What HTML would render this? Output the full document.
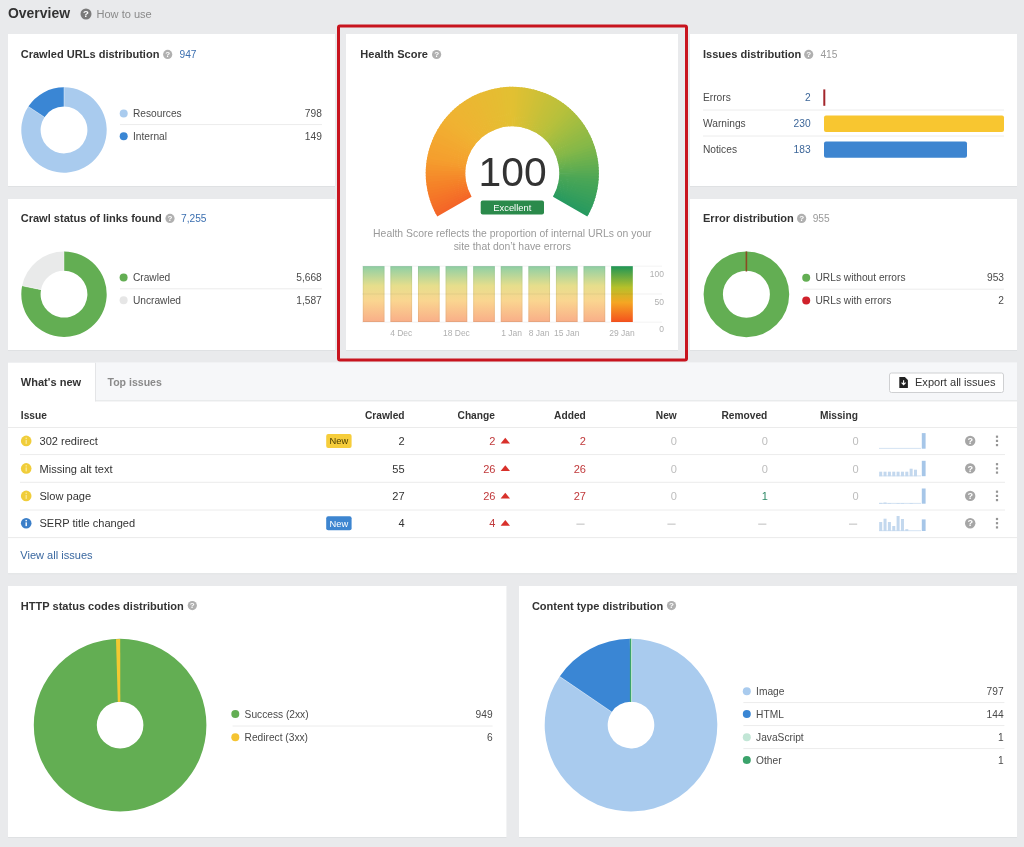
<!DOCTYPE html><html><head><meta charset="utf-8"><style>html,body{margin:0;padding:0;background:#e9eaec;}svg{display:block;will-change:transform}text{font-family:"Liberation Sans", sans-serif;}</style></head><body>
<svg width="1024" height="847" viewBox="0 0 1024 847">
<rect x="0" y="0" width="1024" height="847" fill="#e9eaec" rx="0" />
<text x="8" y="17.8" font-size="13.95" fill="#333" font-weight="bold" text-anchor="start" >Overview</text>
<circle cx="86" cy="14" r="5.5" fill="#7a7a7a"/>
<text x="86" y="17.41" font-size="9.625" fill="#fff" font-weight="bold" text-anchor="middle" >?</text>
<text x="96.5" y="18" font-size="11.05" fill="#8a8a8a" font-weight="normal" text-anchor="start" >How to use</text>
<rect x="8" y="35" width="327" height="152" fill="#dfe1e3" rx="0" />
<rect x="8" y="34" width="327" height="152" fill="#fff" rx="0" />
<text x="20.7" y="58.4" font-size="11.05" fill="#333" font-weight="bold" text-anchor="start" >Crawled URLs distribution</text>
<circle cx="167.7" cy="54.4" r="4.6" fill="#b0b0b0"/>
<text x="167.7" y="57.251999999999995" font-size="8.049999999999999" fill="#fff" font-weight="bold" text-anchor="middle" >?</text>
<text x="179.5" y="58.4" font-size="10.2" fill="#3b6fb0" font-weight="normal" text-anchor="start" >947</text>
<path d="M64.00,87.30 A42.7,42.7 0 1,1 28.33,106.52 L44.46,117.13 A23.4,23.4 0 1,0 64.00,106.60 Z" fill="#a9cbee"/>
<path d="M28.33,106.52 A42.7,42.7 0 0,1 64.00,87.30 L64.00,106.60 A23.4,23.4 0 0,0 44.46,117.13 Z" fill="#3a86d4"/>
<line x1="64.00" y1="106.60" x2="64.00" y2="87.30" stroke="rgba(255,255,255,0.45)" stroke-width="0.9"/>
<line x1="44.46" y1="117.13" x2="28.33" y2="106.52" stroke="rgba(255,255,255,0.45)" stroke-width="0.9"/>
<circle cx="123.7" cy="113.4" r="4" fill="#a9cbee"/>
<text x="133.0" y="117.10000000000001" font-size="10.2" fill="#4a4a4a" font-weight="normal" text-anchor="start" >Resources</text>
<text x="321.8" y="117.10000000000001" font-size="10.2" fill="#4a4a4a" font-weight="normal" text-anchor="end" >798</text>
<line x1="120" y1="124.6" x2="322" y2="124.6" stroke="#ececec" stroke-width="1"/>
<circle cx="123.7" cy="136.2" r="4" fill="#3a86d4"/>
<text x="133.0" y="139.89999999999998" font-size="10.2" fill="#4a4a4a" font-weight="normal" text-anchor="start" >Internal</text>
<text x="321.8" y="139.89999999999998" font-size="10.2" fill="#4a4a4a" font-weight="normal" text-anchor="end" >149</text>
<rect x="8" y="200" width="327" height="151" fill="#dfe1e3" rx="0" />
<rect x="8" y="199" width="327" height="151" fill="#fff" rx="0" />
<text x="20.7" y="222.2" font-size="11.05" fill="#333" font-weight="bold" text-anchor="start" >Crawl status of links found</text>
<circle cx="170" cy="218.4" r="4.6" fill="#b0b0b0"/>
<text x="170" y="221.252" font-size="8.049999999999999" fill="#fff" font-weight="bold" text-anchor="middle" >?</text>
<text x="181" y="222.2" font-size="10.2" fill="#3b6fb0" font-weight="normal" text-anchor="start" >7,255</text>
<path d="M64.00,251.50 A42.7,42.7 0 1,1 22.12,285.87 L41.05,289.63 A23.4,23.4 0 1,0 64.00,270.80 Z" fill="#63ae53"/>
<path d="M22.12,285.87 A42.7,42.7 0 0,1 64.00,251.50 L64.00,270.80 A23.4,23.4 0 0,0 41.05,289.63 Z" fill="#e9eaea"/>
<line x1="64.00" y1="270.80" x2="64.00" y2="251.50" stroke="rgba(255,255,255,0.45)" stroke-width="0.9"/>
<line x1="41.05" y1="289.63" x2="22.12" y2="285.87" stroke="rgba(255,255,255,0.45)" stroke-width="0.9"/>
<circle cx="123.6" cy="277.4" r="4" fill="#63ae53"/>
<text x="132.9" y="281.09999999999997" font-size="10.2" fill="#4a4a4a" font-weight="normal" text-anchor="start" >Crawled</text>
<text x="321.8" y="281.09999999999997" font-size="10.2" fill="#4a4a4a" font-weight="normal" text-anchor="end" >5,668</text>
<line x1="120" y1="288.8" x2="322" y2="288.8" stroke="#ececec" stroke-width="1"/>
<circle cx="123.6" cy="300.2" r="4" fill="#e6e6e6"/>
<text x="132.9" y="303.9" font-size="10.2" fill="#4a4a4a" font-weight="normal" text-anchor="start" >Uncrawled</text>
<text x="321.8" y="303.9" font-size="10.2" fill="#4a4a4a" font-weight="normal" text-anchor="end" >1,587</text>
<rect x="690" y="35" width="327" height="152" fill="#dfe1e3" rx="0" />
<rect x="690" y="34" width="327" height="152" fill="#fff" rx="0" />
<text x="703" y="58.4" font-size="11.05" fill="#333" font-weight="bold" text-anchor="start" >Issues distribution</text>
<circle cx="808.7" cy="54.4" r="4.6" fill="#b0b0b0"/>
<text x="808.7" y="57.251999999999995" font-size="8.049999999999999" fill="#fff" font-weight="bold" text-anchor="middle" >?</text>
<text x="820.4" y="58.4" font-size="10.2" fill="#999" font-weight="normal" text-anchor="start" >415</text>
<text x="703" y="100.9" font-size="10.2" fill="#4a4a4a" font-weight="normal" text-anchor="start" >Errors</text>
<text x="810.6" y="100.9" font-size="10.2" fill="#3c6699" font-weight="normal" text-anchor="end" >2</text>
<text x="703" y="126.9" font-size="10.2" fill="#4a4a4a" font-weight="normal" text-anchor="start" >Warnings</text>
<text x="810.6" y="126.9" font-size="10.2" fill="#3c6699" font-weight="normal" text-anchor="end" >230</text>
<text x="703" y="152.89999999999998" font-size="10.2" fill="#4a4a4a" font-weight="normal" text-anchor="start" >Notices</text>
<text x="810.6" y="152.89999999999998" font-size="10.2" fill="#3c6699" font-weight="normal" text-anchor="end" >183</text>
<line x1="703" y1="110" x2="1004" y2="110" stroke="#ececec" stroke-width="1"/>
<line x1="703" y1="136" x2="1004" y2="136" stroke="#ececec" stroke-width="1"/>
<rect x="823.3" y="89.4" width="2" height="16.4" fill="#a3262c" rx="0" />
<rect x="824" y="115.4" width="180" height="16.6" fill="#f8c630" rx="2" />
<rect x="824" y="141.4" width="143" height="16.4" fill="#3d85d0" rx="2" />
<rect x="690" y="200" width="327" height="151" fill="#dfe1e3" rx="0" />
<rect x="690" y="199" width="327" height="151" fill="#fff" rx="0" />
<text x="703" y="222.2" font-size="11.05" fill="#333" font-weight="bold" text-anchor="start" >Error distribution</text>
<circle cx="801.6" cy="218.4" r="4.6" fill="#b0b0b0"/>
<text x="801.6" y="221.252" font-size="8.049999999999999" fill="#fff" font-weight="bold" text-anchor="middle" >?</text>
<text x="812.7" y="222.2" font-size="10.2" fill="#999" font-weight="normal" text-anchor="start" >955</text>
<path d="M703.6,294.3 a42.8,42.8 0 1,0 85.6,0 a42.8,42.8 0 1,0 -85.6,0 Z M722.9,294.3 a23.5,23.5 0 1,1 47.0,0 a23.5,23.5 0 1,1 -47.0,0 Z" fill="#63ae53" fill-rule="evenodd"/>
<rect x="745.6" y="251.5" width="1.6" height="20" fill="#8a4a22" rx="0" />
<circle cx="806.2" cy="277.7" r="4" fill="#63ae53"/>
<text x="815.5" y="281.4" font-size="10.2" fill="#4a4a4a" font-weight="normal" text-anchor="start" >URLs without errors</text>
<text x="1004" y="281.4" font-size="10.2" fill="#4a4a4a" font-weight="normal" text-anchor="end" >953</text>
<line x1="803" y1="289.2" x2="1004" y2="289.2" stroke="#ececec" stroke-width="1"/>
<circle cx="806.2" cy="300.4" r="4" fill="#d0212b"/>
<text x="815.5" y="304.09999999999997" font-size="10.2" fill="#4a4a4a" font-weight="normal" text-anchor="start" >URLs with errors</text>
<text x="1004" y="304.09999999999997" font-size="10.2" fill="#4a4a4a" font-weight="normal" text-anchor="end" >2</text>
<rect x="346" y="35" width="332" height="316" fill="#dfe1e3" rx="0" />
<rect x="346" y="34" width="332" height="316" fill="#fff" rx="0" />
<rect x="338.5" y="26" width="348" height="334" fill="none" stroke="#c8141e" stroke-width="3" rx="1.5"/>
<text x="360.3" y="58.3" font-size="11.05" fill="#333" font-weight="bold" text-anchor="start" >Health Score</text>
<circle cx="436.6" cy="54.5" r="4.6" fill="#b0b0b0"/>
<text x="436.6" y="57.352" font-size="8.049999999999999" fill="#fff" font-weight="bold" text-anchor="middle" >?</text>
<defs><clipPath id="gclip"><path d="M437.30,216.60 A86.6,86.6 0 1,1 587.30,216.60 L553.00,196.80 A47,47 0 1,0 471.60,196.80 Z"/></clipPath></defs>
<g clip-path="url(#gclip)">
<path d="M435.50,219.45 A89.6,89.6 0 0,1 432.68,214.40 L473.20,193.48 A44,44 0 0,0 474.58,195.96 Z" fill="#f46528"/>
<path d="M433.19,215.36 A89.6,89.6 0 0,1 431.29,211.59 L472.52,192.10 A44,44 0 0,0 473.45,193.96 Z" fill="#f46828"/>
<path d="M431.77,212.58 A89.6,89.6 0 0,1 430.01,208.74 L471.89,190.70 A44,44 0 0,0 472.75,192.59 Z" fill="#f46b28"/>
<path d="M430.45,209.74 A89.6,89.6 0 0,1 428.82,205.85 L471.31,189.28 A44,44 0 0,0 472.10,191.20 Z" fill="#f46e28"/>
<path d="M429.22,206.86 A89.6,89.6 0 0,1 427.74,202.91 L470.77,187.84 A44,44 0 0,0 471.50,189.78 Z" fill="#f47128"/>
<path d="M428.10,203.95 A89.6,89.6 0 0,1 426.75,199.94 L470.29,186.38 A44,44 0 0,0 470.95,188.35 Z" fill="#f57328"/>
<path d="M427.09,200.99 A89.6,89.6 0 0,1 425.88,196.94 L469.86,184.91 A44,44 0 0,0 470.45,186.90 Z" fill="#f57628"/>
<path d="M426.17,198.00 A89.6,89.6 0 0,1 425.10,193.91 L469.48,183.42 A44,44 0 0,0 470.00,185.43 Z" fill="#f57928"/>
<path d="M425.36,194.98 A89.6,89.6 0 0,1 424.44,190.86 L469.15,181.92 A44,44 0 0,0 469.61,183.94 Z" fill="#f57c28"/>
<path d="M424.66,191.93 A89.6,89.6 0 0,1 423.88,187.78 L468.88,180.41 A44,44 0 0,0 469.26,182.45 Z" fill="#f57f28"/>
<path d="M424.06,188.86 A89.6,89.6 0 0,1 423.43,184.68 L468.66,178.89 A44,44 0 0,0 468.97,180.94 Z" fill="#f58228"/>
<path d="M423.57,185.77 A89.6,89.6 0 0,1 423.08,181.58 L468.49,177.36 A44,44 0 0,0 468.73,179.42 Z" fill="#f58429"/>
<path d="M423.19,182.67 A89.6,89.6 0 0,1 422.85,178.46 L468.37,175.83 A44,44 0 0,0 468.54,177.90 Z" fill="#f5882a"/>
<path d="M422.92,179.55 A89.6,89.6 0 0,1 422.72,175.33 L468.31,174.30 A44,44 0 0,0 468.41,176.37 Z" fill="#f58a2a"/>
<path d="M422.75,176.43 A89.6,89.6 0 0,1 422.71,172.21 L468.30,172.76 A44,44 0 0,0 468.33,174.84 Z" fill="#f58e2b"/>
<path d="M422.70,173.30 A89.6,89.6 0 0,1 422.80,169.08 L468.35,171.23 A44,44 0 0,0 468.30,173.30 Z" fill="#f5902b"/>
<path d="M422.75,170.17 A89.6,89.6 0 0,1 423.00,165.96 L468.45,169.69 A44,44 0 0,0 468.33,171.76 Z" fill="#f5942c"/>
<path d="M422.92,167.05 A89.6,89.6 0 0,1 423.31,162.85 L468.60,168.17 A44,44 0 0,0 468.41,170.23 Z" fill="#f5962c"/>
<path d="M423.19,163.93 A89.6,89.6 0 0,1 423.73,159.75 L468.81,166.64 A44,44 0 0,0 468.54,168.70 Z" fill="#f59a2d"/>
<path d="M423.57,160.83 A89.6,89.6 0 0,1 424.26,156.66 L469.07,165.13 A44,44 0 0,0 468.73,167.18 Z" fill="#f59c2e"/>
<path d="M424.06,157.74 A89.6,89.6 0 0,1 424.89,153.60 L469.38,163.63 A44,44 0 0,0 468.97,165.66 Z" fill="#f59f2e"/>
<path d="M424.66,154.67 A89.6,89.6 0 0,1 425.63,150.56 L469.74,162.13 A44,44 0 0,0 469.26,164.15 Z" fill="#f4a02e"/>
<path d="M425.36,151.62 A89.6,89.6 0 0,1 426.48,147.55 L470.16,160.66 A44,44 0 0,0 469.61,162.66 Z" fill="#f4a12f"/>
<path d="M426.17,148.60 A89.6,89.6 0 0,1 427.43,144.57 L470.62,159.19 A44,44 0 0,0 470.00,161.17 Z" fill="#f4a32f"/>
<path d="M427.09,145.61 A89.6,89.6 0 0,1 428.48,141.63 L471.14,157.75 A44,44 0 0,0 470.45,159.70 Z" fill="#f4a42f"/>
<path d="M428.10,142.65 A89.6,89.6 0 0,1 429.64,138.72 L471.71,156.32 A44,44 0 0,0 470.95,158.25 Z" fill="#f3a52f"/>
<path d="M429.22,139.74 A89.6,89.6 0 0,1 430.90,135.86 L472.33,154.91 A44,44 0 0,0 471.50,156.82 Z" fill="#f3a730"/>
<path d="M430.45,136.86 A89.6,89.6 0 0,1 432.25,133.04 L472.99,153.53 A44,44 0 0,0 472.10,155.40 Z" fill="#f2a830"/>
<path d="M431.77,134.02 A89.6,89.6 0 0,1 433.71,130.27 L473.71,152.17 A44,44 0 0,0 472.75,154.01 Z" fill="#f2a930"/>
<path d="M433.19,131.24 A89.6,89.6 0 0,1 435.26,127.56 L474.47,150.84 A44,44 0 0,0 473.45,152.64 Z" fill="#f2ab31"/>
<path d="M434.70,128.50 A89.6,89.6 0 0,1 436.90,124.89 L475.27,149.53 A44,44 0 0,0 474.19,151.30 Z" fill="#f2ac31"/>
<path d="M436.31,125.82 A89.6,89.6 0 0,1 438.64,122.29 L476.13,148.25 A44,44 0 0,0 474.99,149.98 Z" fill="#f1ad31"/>
<path d="M438.02,123.20 A89.6,89.6 0 0,1 440.46,119.75 L477.02,147.00 A44,44 0 0,0 475.82,148.70 Z" fill="#f1af31"/>
<path d="M439.81,120.63 A89.6,89.6 0 0,1 442.37,117.28 L477.96,145.79 A44,44 0 0,0 476.70,147.44 Z" fill="#f0b032"/>
<path d="M441.69,118.14 A89.6,89.6 0 0,1 444.37,114.87 L478.94,144.61 A44,44 0 0,0 477.63,146.21 Z" fill="#f0b132"/>
<path d="M443.66,115.71 A89.6,89.6 0 0,1 446.45,112.54 L479.96,143.46 A44,44 0 0,0 478.59,145.02 Z" fill="#f0b232"/>
<path d="M445.71,113.35 A89.6,89.6 0 0,1 448.61,110.28 L481.02,142.35 A44,44 0 0,0 479.60,143.86 Z" fill="#efb332"/>
<path d="M447.85,111.06 A89.6,89.6 0 0,1 450.85,108.09 L482.12,141.28 A44,44 0 0,0 480.65,142.74 Z" fill="#efb332"/>
<path d="M450.06,108.85 A89.6,89.6 0 0,1 453.16,105.99 L483.26,140.24 A44,44 0 0,0 481.74,141.65 Z" fill="#eeb432"/>
<path d="M452.35,106.71 A89.6,89.6 0 0,1 455.55,103.96 L484.43,139.25 A44,44 0 0,0 482.86,140.60 Z" fill="#edb532"/>
<path d="M454.71,104.66 A89.6,89.6 0 0,1 458.00,102.03 L485.64,138.30 A44,44 0 0,0 484.02,139.59 Z" fill="#edb532"/>
<path d="M457.14,102.69 A89.6,89.6 0 0,1 460.52,100.17 L486.87,137.39 A44,44 0 0,0 485.21,138.63 Z" fill="#ecb632"/>
<path d="M459.63,100.81 A89.6,89.6 0 0,1 463.11,98.41 L488.14,136.52 A44,44 0 0,0 486.44,137.70 Z" fill="#ecb632"/>
<path d="M462.20,99.02 A89.6,89.6 0 0,1 465.75,96.74 L489.44,135.70 A44,44 0 0,0 487.70,136.82 Z" fill="#ebb732"/>
<path d="M464.82,97.31 A89.6,89.6 0 0,1 468.45,95.16 L490.77,134.93 A44,44 0 0,0 488.98,135.99 Z" fill="#ebb732"/>
<path d="M467.50,95.70 A89.6,89.6 0 0,1 471.20,93.68 L492.12,134.20 A44,44 0 0,0 490.30,135.19 Z" fill="#eab832"/>
<path d="M470.24,94.19 A89.6,89.6 0 0,1 474.01,92.29 L493.50,133.52 A44,44 0 0,0 491.64,134.45 Z" fill="#eab832"/>
<path d="M473.02,92.77 A89.6,89.6 0 0,1 476.86,91.01 L494.90,132.89 A44,44 0 0,0 493.01,133.75 Z" fill="#e9b932"/>
<path d="M475.86,91.45 A89.6,89.6 0 0,1 479.75,89.82 L496.32,132.31 A44,44 0 0,0 494.40,133.10 Z" fill="#e8ba32"/>
<path d="M478.74,90.22 A89.6,89.6 0 0,1 482.69,88.74 L497.76,131.77 A44,44 0 0,0 495.82,132.50 Z" fill="#e8ba32"/>
<path d="M481.65,89.10 A89.6,89.6 0 0,1 485.66,87.75 L499.22,131.29 A44,44 0 0,0 497.25,131.95 Z" fill="#e7bb32"/>
<path d="M484.61,88.09 A89.6,89.6 0 0,1 488.66,86.88 L500.69,130.86 A44,44 0 0,0 498.70,131.45 Z" fill="#e7bb32"/>
<path d="M487.60,87.17 A89.6,89.6 0 0,1 491.69,86.10 L502.18,130.48 A44,44 0 0,0 500.17,131.00 Z" fill="#e6bc32"/>
<path d="M490.62,86.36 A89.6,89.6 0 0,1 494.74,85.44 L503.68,130.15 A44,44 0 0,0 501.66,130.61 Z" fill="#e6bc32"/>
<path d="M493.67,85.66 A89.6,89.6 0 0,1 497.82,84.88 L505.19,129.88 A44,44 0 0,0 503.15,130.26 Z" fill="#e5bd32"/>
<path d="M496.74,85.06 A89.6,89.6 0 0,1 500.92,84.43 L506.71,129.66 A44,44 0 0,0 504.66,129.97 Z" fill="#e5bd32"/>
<path d="M499.83,84.57 A89.6,89.6 0 0,1 504.02,84.08 L508.24,129.49 A44,44 0 0,0 506.18,129.73 Z" fill="#e4be32"/>
<path d="M502.93,84.19 A89.6,89.6 0 0,1 507.14,83.85 L509.77,129.37 A44,44 0 0,0 507.70,129.54 Z" fill="#e3bf32"/>
<path d="M506.05,83.92 A89.6,89.6 0 0,1 510.27,83.72 L511.30,129.31 A44,44 0 0,0 509.23,129.41 Z" fill="#e3bf32"/>
<path d="M509.17,83.75 A89.6,89.6 0 0,1 513.39,83.71 L512.84,129.30 A44,44 0 0,0 510.76,129.33 Z" fill="#e2c032"/>
<path d="M512.30,83.70 A89.6,89.6 0 0,1 516.52,83.80 L514.37,129.35 A44,44 0 0,0 512.30,129.30 Z" fill="#e1c032"/>
<path d="M515.43,83.75 A89.6,89.6 0 0,1 519.64,84.00 L515.91,129.45 A44,44 0 0,0 513.84,129.33 Z" fill="#dfc033"/>
<path d="M518.55,83.92 A89.6,89.6 0 0,1 522.75,84.31 L517.43,129.60 A44,44 0 0,0 515.37,129.41 Z" fill="#dcc033"/>
<path d="M521.67,84.19 A89.6,89.6 0 0,1 525.85,84.73 L518.96,129.81 A44,44 0 0,0 516.90,129.54 Z" fill="#dac034"/>
<path d="M524.77,84.57 A89.6,89.6 0 0,1 528.94,85.26 L520.47,130.07 A44,44 0 0,0 518.42,129.73 Z" fill="#d8c034"/>
<path d="M527.86,85.06 A89.6,89.6 0 0,1 532.00,85.89 L521.97,130.38 A44,44 0 0,0 519.94,129.97 Z" fill="#d6c035"/>
<path d="M530.93,85.66 A89.6,89.6 0 0,1 535.04,86.63 L523.47,130.74 A44,44 0 0,0 521.45,130.26 Z" fill="#d4c035"/>
<path d="M533.98,86.36 A89.6,89.6 0 0,1 538.05,87.48 L524.94,131.16 A44,44 0 0,0 522.94,130.61 Z" fill="#d2c036"/>
<path d="M537.00,87.17 A89.6,89.6 0 0,1 541.03,88.43 L526.41,131.62 A44,44 0 0,0 524.43,131.00 Z" fill="#cfc036"/>
<path d="M539.99,88.09 A89.6,89.6 0 0,1 543.97,89.48 L527.85,132.14 A44,44 0 0,0 525.90,131.45 Z" fill="#cdc037"/>
<path d="M542.95,89.10 A89.6,89.6 0 0,1 546.88,90.64 L529.28,132.71 A44,44 0 0,0 527.35,131.95 Z" fill="#cbc037"/>
<path d="M545.86,90.22 A89.6,89.6 0 0,1 549.74,91.90 L530.69,133.33 A44,44 0 0,0 528.78,132.50 Z" fill="#c9c038"/>
<path d="M548.74,91.45 A89.6,89.6 0 0,1 552.56,93.25 L532.07,133.99 A44,44 0 0,0 530.20,133.10 Z" fill="#c6c038"/>
<path d="M551.58,92.77 A89.6,89.6 0 0,1 555.33,94.71 L533.43,134.71 A44,44 0 0,0 531.59,133.75 Z" fill="#c4c039"/>
<path d="M554.36,94.19 A89.6,89.6 0 0,1 558.04,96.26 L534.76,135.47 A44,44 0 0,0 532.96,134.45 Z" fill="#c2c039"/>
<path d="M557.10,95.70 A89.6,89.6 0 0,1 560.71,97.90 L536.07,136.27 A44,44 0 0,0 534.30,135.19 Z" fill="#c0c03a"/>
<path d="M559.78,97.31 A89.6,89.6 0 0,1 563.31,99.64 L537.35,137.13 A44,44 0 0,0 535.62,135.99 Z" fill="#bec03a"/>
<path d="M562.40,99.02 A89.6,89.6 0 0,1 565.85,101.46 L538.60,138.02 A44,44 0 0,0 536.90,136.82 Z" fill="#bcc03b"/>
<path d="M564.97,100.81 A89.6,89.6 0 0,1 568.32,103.37 L539.81,138.96 A44,44 0 0,0 538.16,137.70 Z" fill="#b9c03b"/>
<path d="M567.46,102.69 A89.6,89.6 0 0,1 570.73,105.37 L540.99,139.94 A44,44 0 0,0 539.39,138.63 Z" fill="#b7c03c"/>
<path d="M569.89,104.66 A89.6,89.6 0 0,1 573.06,107.45 L542.14,140.96 A44,44 0 0,0 540.58,139.59 Z" fill="#b4c03c"/>
<path d="M572.25,106.71 A89.6,89.6 0 0,1 575.32,109.61 L543.25,142.02 A44,44 0 0,0 541.74,140.60 Z" fill="#b1bf3d"/>
<path d="M574.54,108.85 A89.6,89.6 0 0,1 577.51,111.85 L544.32,143.12 A44,44 0 0,0 542.86,141.65 Z" fill="#aebf3e"/>
<path d="M576.75,111.06 A89.6,89.6 0 0,1 579.61,114.16 L545.36,144.26 A44,44 0 0,0 543.95,142.74 Z" fill="#aabe3f"/>
<path d="M578.89,113.35 A89.6,89.6 0 0,1 581.64,116.55 L546.35,145.43 A44,44 0 0,0 545.00,143.86 Z" fill="#a7be40"/>
<path d="M580.94,115.71 A89.6,89.6 0 0,1 583.57,119.00 L547.30,146.64 A44,44 0 0,0 546.01,145.02 Z" fill="#a4bd40"/>
<path d="M582.91,118.14 A89.6,89.6 0 0,1 585.43,121.52 L548.21,147.87 A44,44 0 0,0 546.97,146.21 Z" fill="#a0bd41"/>
<path d="M584.79,120.63 A89.6,89.6 0 0,1 587.19,124.11 L549.08,149.14 A44,44 0 0,0 547.90,147.44 Z" fill="#9dbc42"/>
<path d="M586.58,123.20 A89.6,89.6 0 0,1 588.86,126.75 L549.90,150.44 A44,44 0 0,0 548.78,148.70 Z" fill="#9abb43"/>
<path d="M588.29,125.82 A89.6,89.6 0 0,1 590.44,129.45 L550.67,151.77 A44,44 0 0,0 549.61,149.98 Z" fill="#96bb44"/>
<path d="M589.90,128.50 A89.6,89.6 0 0,1 591.92,132.20 L551.40,153.12 A44,44 0 0,0 550.41,151.30 Z" fill="#93ba44"/>
<path d="M591.41,131.24 A89.6,89.6 0 0,1 593.31,135.01 L552.08,154.50 A44,44 0 0,0 551.15,152.64 Z" fill="#90ba45"/>
<path d="M592.83,134.02 A89.6,89.6 0 0,1 594.59,137.86 L552.71,155.90 A44,44 0 0,0 551.85,154.01 Z" fill="#8cb946"/>
<path d="M594.15,136.86 A89.6,89.6 0 0,1 595.78,140.75 L553.29,157.32 A44,44 0 0,0 552.50,155.40 Z" fill="#89b947"/>
<path d="M595.38,139.74 A89.6,89.6 0 0,1 596.86,143.69 L553.83,158.76 A44,44 0 0,0 553.10,156.82 Z" fill="#86b848"/>
<path d="M596.50,142.65 A89.6,89.6 0 0,1 597.85,146.66 L554.31,160.22 A44,44 0 0,0 553.65,158.25 Z" fill="#82b749"/>
<path d="M597.51,145.61 A89.6,89.6 0 0,1 598.72,149.66 L554.74,161.69 A44,44 0 0,0 554.15,159.70 Z" fill="#7db64a"/>
<path d="M598.43,148.60 A89.6,89.6 0 0,1 599.50,152.69 L555.12,163.18 A44,44 0 0,0 554.60,161.17 Z" fill="#78b44b"/>
<path d="M599.24,151.62 A89.6,89.6 0 0,1 600.16,155.74 L555.45,164.68 A44,44 0 0,0 554.99,162.66 Z" fill="#74b34c"/>
<path d="M599.94,154.67 A89.6,89.6 0 0,1 600.72,158.82 L555.72,166.19 A44,44 0 0,0 555.34,164.15 Z" fill="#6fb24d"/>
<path d="M600.54,157.74 A89.6,89.6 0 0,1 601.17,161.92 L555.94,167.71 A44,44 0 0,0 555.63,165.66 Z" fill="#6ab04e"/>
<path d="M601.03,160.83 A89.6,89.6 0 0,1 601.52,165.02 L556.11,169.24 A44,44 0 0,0 555.87,167.18 Z" fill="#66af4f"/>
<path d="M601.41,163.93 A89.6,89.6 0 0,1 601.75,168.14 L556.23,170.77 A44,44 0 0,0 556.06,168.70 Z" fill="#61ad50"/>
<path d="M601.68,167.05 A89.6,89.6 0 0,1 601.88,171.27 L556.29,172.30 A44,44 0 0,0 556.19,170.23 Z" fill="#5dac52"/>
<path d="M601.85,170.17 A89.6,89.6 0 0,1 601.89,174.39 L556.30,173.84 A44,44 0 0,0 556.27,171.76 Z" fill="#58aa53"/>
<path d="M601.90,173.30 A89.6,89.6 0 0,1 601.80,177.52 L556.25,175.37 A44,44 0 0,0 556.30,173.30 Z" fill="#53a954"/>
<path d="M601.85,176.43 A89.6,89.6 0 0,1 601.60,180.64 L556.15,176.91 A44,44 0 0,0 556.27,174.84 Z" fill="#4fa755"/>
<path d="M601.68,179.55 A89.6,89.6 0 0,1 601.29,183.75 L556.00,178.43 A44,44 0 0,0 556.19,176.37 Z" fill="#4aa656"/>
<path d="M601.41,182.67 A89.6,89.6 0 0,1 600.87,186.85 L555.79,179.96 A44,44 0 0,0 556.06,177.90 Z" fill="#47a557"/>
<path d="M601.03,185.77 A89.6,89.6 0 0,1 600.34,189.94 L555.53,181.47 A44,44 0 0,0 555.87,179.42 Z" fill="#44a458"/>
<path d="M600.54,188.86 A89.6,89.6 0 0,1 599.71,193.00 L555.22,182.97 A44,44 0 0,0 555.63,180.94 Z" fill="#41a358"/>
<path d="M599.94,191.93 A89.6,89.6 0 0,1 598.97,196.04 L554.86,184.47 A44,44 0 0,0 555.34,182.45 Z" fill="#3ea259"/>
<path d="M599.24,194.98 A89.6,89.6 0 0,1 598.12,199.05 L554.44,185.94 A44,44 0 0,0 554.99,183.94 Z" fill="#3ca15a"/>
<path d="M598.43,198.00 A89.6,89.6 0 0,1 597.17,202.03 L553.98,187.41 A44,44 0 0,0 554.60,185.43 Z" fill="#39a05b"/>
<path d="M597.51,200.99 A89.6,89.6 0 0,1 596.12,204.97 L553.46,188.85 A44,44 0 0,0 554.15,186.90 Z" fill="#369f5c"/>
<path d="M596.50,203.95 A89.6,89.6 0 0,1 594.96,207.88 L552.89,190.28 A44,44 0 0,0 553.65,188.35 Z" fill="#339e5c"/>
<path d="M595.38,206.86 A89.6,89.6 0 0,1 593.70,210.74 L552.27,191.69 A44,44 0 0,0 553.10,189.78 Z" fill="#309d5d"/>
<path d="M594.15,209.74 A89.6,89.6 0 0,1 592.35,213.56 L551.61,193.07 A44,44 0 0,0 552.50,191.20 Z" fill="#2d9c5e"/>
<path d="M592.83,212.58 A89.6,89.6 0 0,1 590.89,216.33 L550.89,194.43 A44,44 0 0,0 551.85,192.59 Z" fill="#2a9b5f"/>
<path d="M591.41,215.36 A89.6,89.6 0 0,1 589.10,219.45 L550.02,195.96 A44,44 0 0,0 551.15,193.96 Z" fill="#279a60"/>
</g>
<text x="512.6" y="185.6" font-size="40.8" fill="#333" font-weight="normal" text-anchor="middle" >100</text>
<rect x="480.7" y="200.5" width="63.3" height="14" fill="#2b8a4b" rx="2" />
<text x="512.3" y="210.6" font-size="9.35" fill="#fff" font-weight="normal" text-anchor="middle" >Excellent</text>
<text x="512.3" y="237.2" font-size="10.4" fill="#9a9a9a" font-weight="normal" text-anchor="middle" >Health Score reflects the proportion of internal URLs on your</text>
<text x="512.3" y="250.2" font-size="10.4" fill="#9a9a9a" font-weight="normal" text-anchor="middle" >site that don’t have errors</text>
<defs><linearGradient id="gf" x1="0" y1="0" x2="0" y2="1"><stop offset="0" stop-color="#8ecfa5"/><stop offset="0.35" stop-color="#e6de8c"/><stop offset="0.62" stop-color="#fad590"/><stop offset="1" stop-color="#f9ae88"/></linearGradient><linearGradient id="gs" x1="0" y1="0" x2="0" y2="1"><stop offset="0" stop-color="#1f9656"/><stop offset="0.38" stop-color="#b6c02a"/><stop offset="0.65" stop-color="#f5a623"/><stop offset="1" stop-color="#f4511e"/></linearGradient></defs>
<rect x="362.8" y="266.2" width="21.7" height="55.8" fill="url(#gf)" rx="0" />
<rect x="363.30" y="266.7" width="20.7" height="54.8" fill="none" stroke="rgba(60,80,60,0.07)" stroke-width="1"/>
<rect x="390.39" y="266.2" width="21.7" height="55.8" fill="url(#gf)" rx="0" />
<rect x="390.89" y="266.7" width="20.7" height="54.8" fill="none" stroke="rgba(60,80,60,0.07)" stroke-width="1"/>
<rect x="417.98" y="266.2" width="21.7" height="55.8" fill="url(#gf)" rx="0" />
<rect x="418.48" y="266.7" width="20.7" height="54.8" fill="none" stroke="rgba(60,80,60,0.07)" stroke-width="1"/>
<rect x="445.57" y="266.2" width="21.7" height="55.8" fill="url(#gf)" rx="0" />
<rect x="446.07" y="266.7" width="20.7" height="54.8" fill="none" stroke="rgba(60,80,60,0.07)" stroke-width="1"/>
<rect x="473.16" y="266.2" width="21.7" height="55.8" fill="url(#gf)" rx="0" />
<rect x="473.66" y="266.7" width="20.7" height="54.8" fill="none" stroke="rgba(60,80,60,0.07)" stroke-width="1"/>
<rect x="500.75" y="266.2" width="21.7" height="55.8" fill="url(#gf)" rx="0" />
<rect x="501.25" y="266.7" width="20.7" height="54.8" fill="none" stroke="rgba(60,80,60,0.07)" stroke-width="1"/>
<rect x="528.34" y="266.2" width="21.7" height="55.8" fill="url(#gf)" rx="0" />
<rect x="528.84" y="266.7" width="20.7" height="54.8" fill="none" stroke="rgba(60,80,60,0.07)" stroke-width="1"/>
<rect x="555.93" y="266.2" width="21.7" height="55.8" fill="url(#gf)" rx="0" />
<rect x="556.43" y="266.7" width="20.7" height="54.8" fill="none" stroke="rgba(60,80,60,0.07)" stroke-width="1"/>
<rect x="583.52" y="266.2" width="21.7" height="55.8" fill="url(#gf)" rx="0" />
<rect x="584.02" y="266.7" width="20.7" height="54.8" fill="none" stroke="rgba(60,80,60,0.07)" stroke-width="1"/>
<rect x="611.11" y="266.2" width="21.7" height="55.8" fill="url(#gs)" rx="0" />
<line x1="362" y1="294" x2="662" y2="294" stroke="rgba(0,0,0,0.06)" stroke-width="1"/>
<line x1="362" y1="322.2" x2="662" y2="322.2" stroke="rgba(0,0,0,0.05)" stroke-width="1"/>
<line x1="362" y1="266.2" x2="662" y2="266.2" stroke="rgba(0,0,0,0.05)" stroke-width="1"/>
<text x="664" y="277" font-size="8.5" fill="#b0b0b0" font-weight="normal" text-anchor="end" >100</text>
<text x="664" y="304.6" font-size="8.5" fill="#b0b0b0" font-weight="normal" text-anchor="end" >50</text>
<text x="664" y="332.3" font-size="8.5" fill="#b0b0b0" font-weight="normal" text-anchor="end" >0</text>
<text x="401.24" y="336.2" font-size="8.5" fill="#b0b0b0" font-weight="normal" text-anchor="middle" >4 Dec</text>
<text x="456.42" y="336.2" font-size="8.5" fill="#b0b0b0" font-weight="normal" text-anchor="middle" >18 Dec</text>
<text x="511.6" y="336.2" font-size="8.5" fill="#b0b0b0" font-weight="normal" text-anchor="middle" >1 Jan</text>
<text x="539.19" y="336.2" font-size="8.5" fill="#b0b0b0" font-weight="normal" text-anchor="middle" >8 Jan</text>
<text x="566.7800000000001" y="336.2" font-size="8.5" fill="#b0b0b0" font-weight="normal" text-anchor="middle" >15 Jan</text>
<text x="621.96" y="336.2" font-size="8.5" fill="#b0b0b0" font-weight="normal" text-anchor="middle" >29 Jan</text>
<rect x="8" y="363.7" width="1009" height="210.5" fill="#dfe1e3" rx="0" />
<rect x="8" y="362.7" width="1009" height="210.5" fill="#fff" rx="0" />
<rect x="95" y="362.7" width="922" height="38.6" fill="#f6f7f9" rx="0" />
<line x1="95.5" y1="362.7" x2="95.5" y2="401.3" stroke="#e4e5e7" stroke-width="1"/>
<line x1="95" y1="400.8" x2="1017" y2="400.8" stroke="#e4e5e7" stroke-width="1"/>
<text x="20.8" y="386.4" font-size="11.05" fill="#333" font-weight="bold" text-anchor="start" >What's new</text>
<text x="107.5" y="386.4" font-size="10.55" fill="#8a8a8a" font-weight="bold" text-anchor="start" >Top issues</text>
<rect x="889.5" y="373" width="114" height="19.5" rx="2" fill="#fff" stroke="#cfd0d2" stroke-width="1"/>
<path d="M899.3,376.9 h5.6 l3,3 v8.2 h-8.6 Z" fill="#222"/>
<path d="M903.6,380.3 v4.2 M901.6,382.7 l2,2 l2,-2" stroke="#fff" stroke-width="1.1" fill="none"/>
<text x="915" y="386.3" font-size="11.05" fill="#333" font-weight="normal" text-anchor="start" >Export all issues</text>
<text x="20.8" y="419.2" font-size="10.2" fill="#333" font-weight="bold" text-anchor="start" >Issue</text>
<text x="404.6" y="419.2" font-size="10.2" fill="#333" font-weight="bold" text-anchor="end" >Crawled</text>
<text x="494.9" y="419.2" font-size="10.2" fill="#333" font-weight="bold" text-anchor="end" >Change</text>
<text x="585.8" y="419.2" font-size="10.2" fill="#333" font-weight="bold" text-anchor="end" >Added</text>
<text x="676.8" y="419.2" font-size="10.2" fill="#333" font-weight="bold" text-anchor="end" >New</text>
<text x="767.3" y="419.2" font-size="10.2" fill="#333" font-weight="bold" text-anchor="end" >Removed</text>
<text x="857.9" y="419.2" font-size="10.2" fill="#333" font-weight="bold" text-anchor="end" >Missing</text>
<line x1="8" y1="427.5" x2="1017" y2="427.5" stroke="#ebebeb" stroke-width="1"/>
<circle cx="26.2" cy="440.9" r="5.3" fill="#f0cd3a"/>
<rect x="25.5" y="437.60" width="1.5" height="1.4" fill="#fae58a"/><rect x="25.5" y="439.90" width="1.5" height="4" fill="#fae58a"/>
<text x="39.5" y="445.0" font-size="11.05" fill="#333" font-weight="normal" text-anchor="start" >302 redirect</text>
<rect x="326.2" y="433.9" width="25.4" height="14" fill="#f6cd3b" rx="2" />
<text x="338.9" y="444.2" font-size="9.35" fill="#4a3c00" font-weight="normal" text-anchor="middle" >New</text>
<text x="404.6" y="445.0" font-size="11.05" fill="#333" font-weight="normal" text-anchor="end" >2</text>
<text x="495.5" y="445.0" font-size="11.05" fill="#c0393b" font-weight="normal" text-anchor="end" >2</text>
<path d="M500.6,443.40 L505.3,437.80 L510,443.40 Z" fill="#d8312b"/>
<text x="586" y="445.0" font-size="11.05" fill="#c0393b" font-weight="normal" text-anchor="end" >2</text>
<text x="677" y="445.0" font-size="11.05" fill="#bdbdbd" font-weight="normal" text-anchor="end" >0</text>
<text x="767.8" y="445.0" font-size="11.05" fill="#bdbdbd" font-weight="normal" text-anchor="end" >0</text>
<text x="858.6" y="445.0" font-size="11.05" fill="#bdbdbd" font-weight="normal" text-anchor="end" >0</text>
<circle cx="970.2" cy="440.9" r="5.2" fill="#a6a6a6"/>
<text x="970.2" y="444.12399999999997" font-size="9.1" fill="#fff" font-weight="bold" text-anchor="middle" >?</text>
<rect x="995.9" y="435.59999999999997" width="2.2" height="2.2" fill="#959595" rx="0" />
<rect x="995.9" y="439.79999999999995" width="2.2" height="2.2" fill="#959595" rx="0" />
<rect x="995.9" y="443.99999999999994" width="2.2" height="2.2" fill="#959595" rx="0" />
<line x1="20" y1="454.6" x2="1005" y2="454.6" stroke="#ececec" stroke-width="1"/>
<circle cx="26.2" cy="468.4" r="5.3" fill="#f0cd3a"/>
<rect x="25.5" y="465.10" width="1.5" height="1.4" fill="#fae58a"/><rect x="25.5" y="467.40" width="1.5" height="4" fill="#fae58a"/>
<text x="39.5" y="472.5" font-size="11.05" fill="#333" font-weight="normal" text-anchor="start" >Missing alt text</text>
<text x="404.6" y="472.5" font-size="11.05" fill="#333" font-weight="normal" text-anchor="end" >55</text>
<text x="495.5" y="472.5" font-size="11.05" fill="#c0393b" font-weight="normal" text-anchor="end" >26</text>
<path d="M500.6,470.90 L505.3,465.30 L510,470.90 Z" fill="#d8312b"/>
<text x="586" y="472.5" font-size="11.05" fill="#c0393b" font-weight="normal" text-anchor="end" >26</text>
<text x="677" y="472.5" font-size="11.05" fill="#bdbdbd" font-weight="normal" text-anchor="end" >0</text>
<text x="767.8" y="472.5" font-size="11.05" fill="#bdbdbd" font-weight="normal" text-anchor="end" >0</text>
<text x="858.6" y="472.5" font-size="11.05" fill="#bdbdbd" font-weight="normal" text-anchor="end" >0</text>
<circle cx="970.2" cy="468.4" r="5.2" fill="#a6a6a6"/>
<text x="970.2" y="471.62399999999997" font-size="9.1" fill="#fff" font-weight="bold" text-anchor="middle" >?</text>
<rect x="995.9" y="463.09999999999997" width="2.2" height="2.2" fill="#959595" rx="0" />
<rect x="995.9" y="467.29999999999995" width="2.2" height="2.2" fill="#959595" rx="0" />
<rect x="995.9" y="471.49999999999994" width="2.2" height="2.2" fill="#959595" rx="0" />
<line x1="20" y1="482.3" x2="1005" y2="482.3" stroke="#ececec" stroke-width="1"/>
<circle cx="26.2" cy="495.9" r="5.3" fill="#f0cd3a"/>
<rect x="25.5" y="492.60" width="1.5" height="1.4" fill="#fae58a"/><rect x="25.5" y="494.90" width="1.5" height="4" fill="#fae58a"/>
<text x="39.5" y="500.0" font-size="11.05" fill="#333" font-weight="normal" text-anchor="start" >Slow page</text>
<text x="404.6" y="500.0" font-size="11.05" fill="#333" font-weight="normal" text-anchor="end" >27</text>
<text x="495.5" y="500.0" font-size="11.05" fill="#c0393b" font-weight="normal" text-anchor="end" >26</text>
<path d="M500.6,498.40 L505.3,492.80 L510,498.40 Z" fill="#d8312b"/>
<text x="586" y="500.0" font-size="11.05" fill="#c0393b" font-weight="normal" text-anchor="end" >27</text>
<text x="677" y="500.0" font-size="11.05" fill="#bdbdbd" font-weight="normal" text-anchor="end" >0</text>
<text x="767.8" y="500.0" font-size="11.05" fill="#2f8a67" font-weight="normal" text-anchor="end" >1</text>
<text x="858.6" y="500.0" font-size="11.05" fill="#bdbdbd" font-weight="normal" text-anchor="end" >0</text>
<circle cx="970.2" cy="495.9" r="5.2" fill="#a6a6a6"/>
<text x="970.2" y="499.12399999999997" font-size="9.1" fill="#fff" font-weight="bold" text-anchor="middle" >?</text>
<rect x="995.9" y="490.59999999999997" width="2.2" height="2.2" fill="#959595" rx="0" />
<rect x="995.9" y="494.79999999999995" width="2.2" height="2.2" fill="#959595" rx="0" />
<rect x="995.9" y="498.99999999999994" width="2.2" height="2.2" fill="#959595" rx="0" />
<line x1="20" y1="510" x2="1005" y2="510" stroke="#ececec" stroke-width="1"/>
<circle cx="26.2" cy="523.2" r="5.3" fill="#3a7ec8"/>
<rect x="25.5" y="522.30" width="1.4" height="3.8" fill="#fff"/><rect x="25.5" y="519.90" width="1.4" height="1.4" fill="#fff"/>
<text x="39.5" y="527.3000000000001" font-size="11.05" fill="#333" font-weight="normal" text-anchor="start" >SERP title changed</text>
<rect x="326.2" y="516.2" width="25.4" height="14" fill="#3d85d0" rx="2" />
<text x="338.9" y="526.5" font-size="9.35" fill="#fff" font-weight="normal" text-anchor="middle" >New</text>
<text x="404.6" y="527.3000000000001" font-size="11.05" fill="#333" font-weight="normal" text-anchor="end" >4</text>
<text x="495.5" y="527.3000000000001" font-size="11.05" fill="#c0393b" font-weight="normal" text-anchor="end" >4</text>
<path d="M500.6,525.70 L505.3,520.10 L510,525.70 Z" fill="#d8312b"/>
<rect x="576.4" y="523.6" width="8.2" height="1.1" fill="#c4c4c4" rx="0" />
<rect x="667.4" y="523.6" width="8.2" height="1.1" fill="#c4c4c4" rx="0" />
<rect x="758.1999999999999" y="523.6" width="8.2" height="1.1" fill="#c4c4c4" rx="0" />
<rect x="849.0" y="523.6" width="8.2" height="1.1" fill="#c4c4c4" rx="0" />
<circle cx="970.2" cy="523.2" r="5.2" fill="#a6a6a6"/>
<text x="970.2" y="526.4240000000001" font-size="9.1" fill="#fff" font-weight="bold" text-anchor="middle" >?</text>
<rect x="995.9" y="517.9" width="2.2" height="2.2" fill="#959595" rx="0" />
<rect x="995.9" y="522.1" width="2.2" height="2.2" fill="#959595" rx="0" />
<rect x="995.9" y="526.3000000000001" width="2.2" height="2.2" fill="#959595" rx="0" />
<line x1="8" y1="537.6" x2="1017" y2="537.6" stroke="#ebebeb" stroke-width="1"/>
<line x1="879" y1="448.40" x2="921" y2="448.40" stroke="#c9dcf0" stroke-width="0.8"/>
<rect x="921.8" y="433.1" width="3.8" height="15.6" fill="#a6c6e8" rx="0" />
<line x1="879" y1="475.90" x2="921" y2="475.90" stroke="#c9dcf0" stroke-width="0.8"/>
<rect x="879.2" y="471.7" width="3" height="4.5" fill="#c3d8ee" rx="0" />
<rect x="883.55" y="471.7" width="3" height="4.5" fill="#c3d8ee" rx="0" />
<rect x="887.9" y="471.7" width="3" height="4.5" fill="#c3d8ee" rx="0" />
<rect x="892.25" y="471.7" width="3" height="4.5" fill="#c3d8ee" rx="0" />
<rect x="896.6" y="471.7" width="3" height="4.5" fill="#c3d8ee" rx="0" />
<rect x="900.95" y="471.7" width="3" height="4.5" fill="#c3d8ee" rx="0" />
<rect x="905.3" y="471.7" width="3" height="4.5" fill="#c3d8ee" rx="0" />
<rect x="909.65" y="468.7" width="3" height="7.5" fill="#c3d8ee" rx="0" />
<rect x="914.0" y="469.7" width="3" height="6.5" fill="#c3d8ee" rx="0" />
<rect x="921.8" y="460.8" width="3.8" height="15.4" fill="#a6c6e8" rx="0" />
<line x1="879" y1="503.40" x2="921" y2="503.40" stroke="#c9dcf0" stroke-width="0.8"/>
<rect x="879.2" y="502.9" width="3" height="0.8" fill="#c3d8ee" rx="0" />
<rect x="883.55" y="502.5" width="3" height="1.2" fill="#c3d8ee" rx="0" />
<rect x="887.9" y="503.1" width="3" height="0.6" fill="#c3d8ee" rx="0" />
<rect x="896.6" y="503.1" width="3" height="0.6" fill="#c3d8ee" rx="0" />
<rect x="900.95" y="503.1" width="3" height="0.6" fill="#c3d8ee" rx="0" />
<rect x="909.65" y="503.1" width="3" height="0.6" fill="#c3d8ee" rx="0" />
<rect x="921.8" y="488.5" width="3.8" height="15.2" fill="#a6c6e8" rx="0" />
<line x1="879" y1="530.70" x2="921" y2="530.70" stroke="#c9dcf0" stroke-width="0.8"/>
<rect x="879.2" y="522.0" width="3" height="9" fill="#c3d8ee" rx="0" />
<rect x="883.55" y="518.7" width="3" height="12.3" fill="#c3d8ee" rx="0" />
<rect x="887.9" y="522.0" width="3" height="9" fill="#c3d8ee" rx="0" />
<rect x="892.25" y="526.0" width="3" height="5" fill="#c3d8ee" rx="0" />
<rect x="896.6" y="516.0" width="3" height="15" fill="#c3d8ee" rx="0" />
<rect x="900.95" y="519.0" width="3" height="12" fill="#c3d8ee" rx="0" />
<rect x="905.3" y="529.2" width="3" height="1.8" fill="#c3d8ee" rx="0" />
<rect x="921.8" y="519.4" width="3.8" height="11.6" fill="#a6c6e8" rx="0" />
<text x="20.3" y="559.4" font-size="11.05" fill="#3a68a0" font-weight="normal" text-anchor="start" >View all issues</text>
<rect x="8" y="587" width="498.5" height="251" fill="#dfe1e3" rx="0" />
<rect x="8" y="586" width="498.5" height="251" fill="#fff" rx="0" />
<text x="20.8" y="609.8" font-size="11.05" fill="#333" font-weight="bold" text-anchor="start" >HTTP status codes distribution</text>
<circle cx="192.3" cy="605.6" r="4.6" fill="#b0b0b0"/>
<text x="192.3" y="608.452" font-size="8.049999999999999" fill="#fff" font-weight="bold" text-anchor="middle" >?</text>
<path d="M33.8,725.1 a86.3,86.3 0 1,0 172.6,0 a86.3,86.3 0 1,0 -172.6,0 Z M96.8,725.1 a23.3,23.3 0 1,1 46.6,0 a23.3,23.3 0 1,1 -46.6,0 Z" fill="#63ae53" fill-rule="evenodd"/>
<path d="M116,639.2 L120.2,638.9 L120.3,702 L117.8,702 Z" fill="#f2c932"/>
<circle cx="235.3" cy="714.1" r="4" fill="#63ae53"/>
<text x="244.60000000000002" y="717.8000000000001" font-size="10.2" fill="#4a4a4a" font-weight="normal" text-anchor="start" >Success (2xx)</text>
<text x="492.6" y="717.8000000000001" font-size="10.2" fill="#4a4a4a" font-weight="normal" text-anchor="end" >949</text>
<line x1="232.6" y1="726" x2="492.6" y2="726" stroke="#ececec" stroke-width="1"/>
<circle cx="235.3" cy="737.3" r="4" fill="#f5c432"/>
<text x="244.60000000000002" y="741.0" font-size="10.2" fill="#4a4a4a" font-weight="normal" text-anchor="start" >Redirect (3xx)</text>
<text x="492.6" y="741.0" font-size="10.2" fill="#4a4a4a" font-weight="normal" text-anchor="end" >6</text>
<rect x="519" y="587" width="498" height="251" fill="#dfe1e3" rx="0" />
<rect x="519" y="586" width="498" height="251" fill="#fff" rx="0" />
<text x="531.9" y="609.8" font-size="11.05" fill="#333" font-weight="bold" text-anchor="start" >Content type distribution</text>
<circle cx="671.5" cy="605.6" r="4.6" fill="#b0b0b0"/>
<text x="671.5" y="608.452" font-size="8.049999999999999" fill="#fff" font-weight="bold" text-anchor="middle" >?</text>
<path d="M631.00,638.80 A86.3,86.3 0 1,1 559.68,676.51 L611.74,711.98 A23.3,23.3 0 1,0 631.00,701.80 Z" fill="#a9cbee"/>
<path d="M559.68,676.51 A86.3,86.3 0 0,1 629.85,638.81 L630.69,701.80 A23.3,23.3 0 0,0 611.74,711.98 Z" fill="#3a86d4"/>
<path d="M629.85,638.81 A86.3,86.3 0 0,1 631.00,638.80 L631.00,701.80 A23.3,23.3 0 0,0 630.69,701.80 Z" fill="#3a86d4"/>
<line x1="611.74" y1="711.98" x2="559.68" y2="676.51" stroke="rgba(255,255,255,0.5)" stroke-width="0.9"/>
<rect x="629.9" y="638.8" width="1.1" height="63.2" fill="#3ba36b"/><rect x="631" y="638.8" width="1.1" height="63.2" fill="#b9e3cf"/>
<circle cx="746.8" cy="691.2" r="4" fill="#a9cbee"/>
<text x="756.0999999999999" y="694.9000000000001" font-size="10.2" fill="#4a4a4a" font-weight="normal" text-anchor="start" >Image</text>
<text x="1003.6" y="694.9000000000001" font-size="10.2" fill="#4a4a4a" font-weight="normal" text-anchor="end" >797</text>
<circle cx="746.8" cy="714.1" r="4" fill="#3a86d4"/>
<text x="756.0999999999999" y="717.8000000000001" font-size="10.2" fill="#4a4a4a" font-weight="normal" text-anchor="start" >HTML</text>
<text x="1003.6" y="717.8000000000001" font-size="10.2" fill="#4a4a4a" font-weight="normal" text-anchor="end" >144</text>
<circle cx="746.8" cy="737.2" r="4" fill="#c2e6d6"/>
<text x="756.0999999999999" y="740.9000000000001" font-size="10.2" fill="#4a4a4a" font-weight="normal" text-anchor="start" >JavaScript</text>
<text x="1003.6" y="740.9000000000001" font-size="10.2" fill="#4a4a4a" font-weight="normal" text-anchor="end" >1</text>
<circle cx="746.8" cy="760.1" r="4" fill="#3ba36b"/>
<text x="756.0999999999999" y="763.8000000000001" font-size="10.2" fill="#4a4a4a" font-weight="normal" text-anchor="start" >Other</text>
<text x="1003.6" y="763.8000000000001" font-size="10.2" fill="#4a4a4a" font-weight="normal" text-anchor="end" >1</text>
<line x1="743.4" y1="702.6" x2="1004.4" y2="702.6" stroke="#ececec" stroke-width="1"/>
<line x1="743.4" y1="725.6" x2="1004.4" y2="725.6" stroke="#ececec" stroke-width="1"/>
<line x1="743.4" y1="748.6" x2="1004.4" y2="748.6" stroke="#ececec" stroke-width="1"/>
</svg></body></html>
